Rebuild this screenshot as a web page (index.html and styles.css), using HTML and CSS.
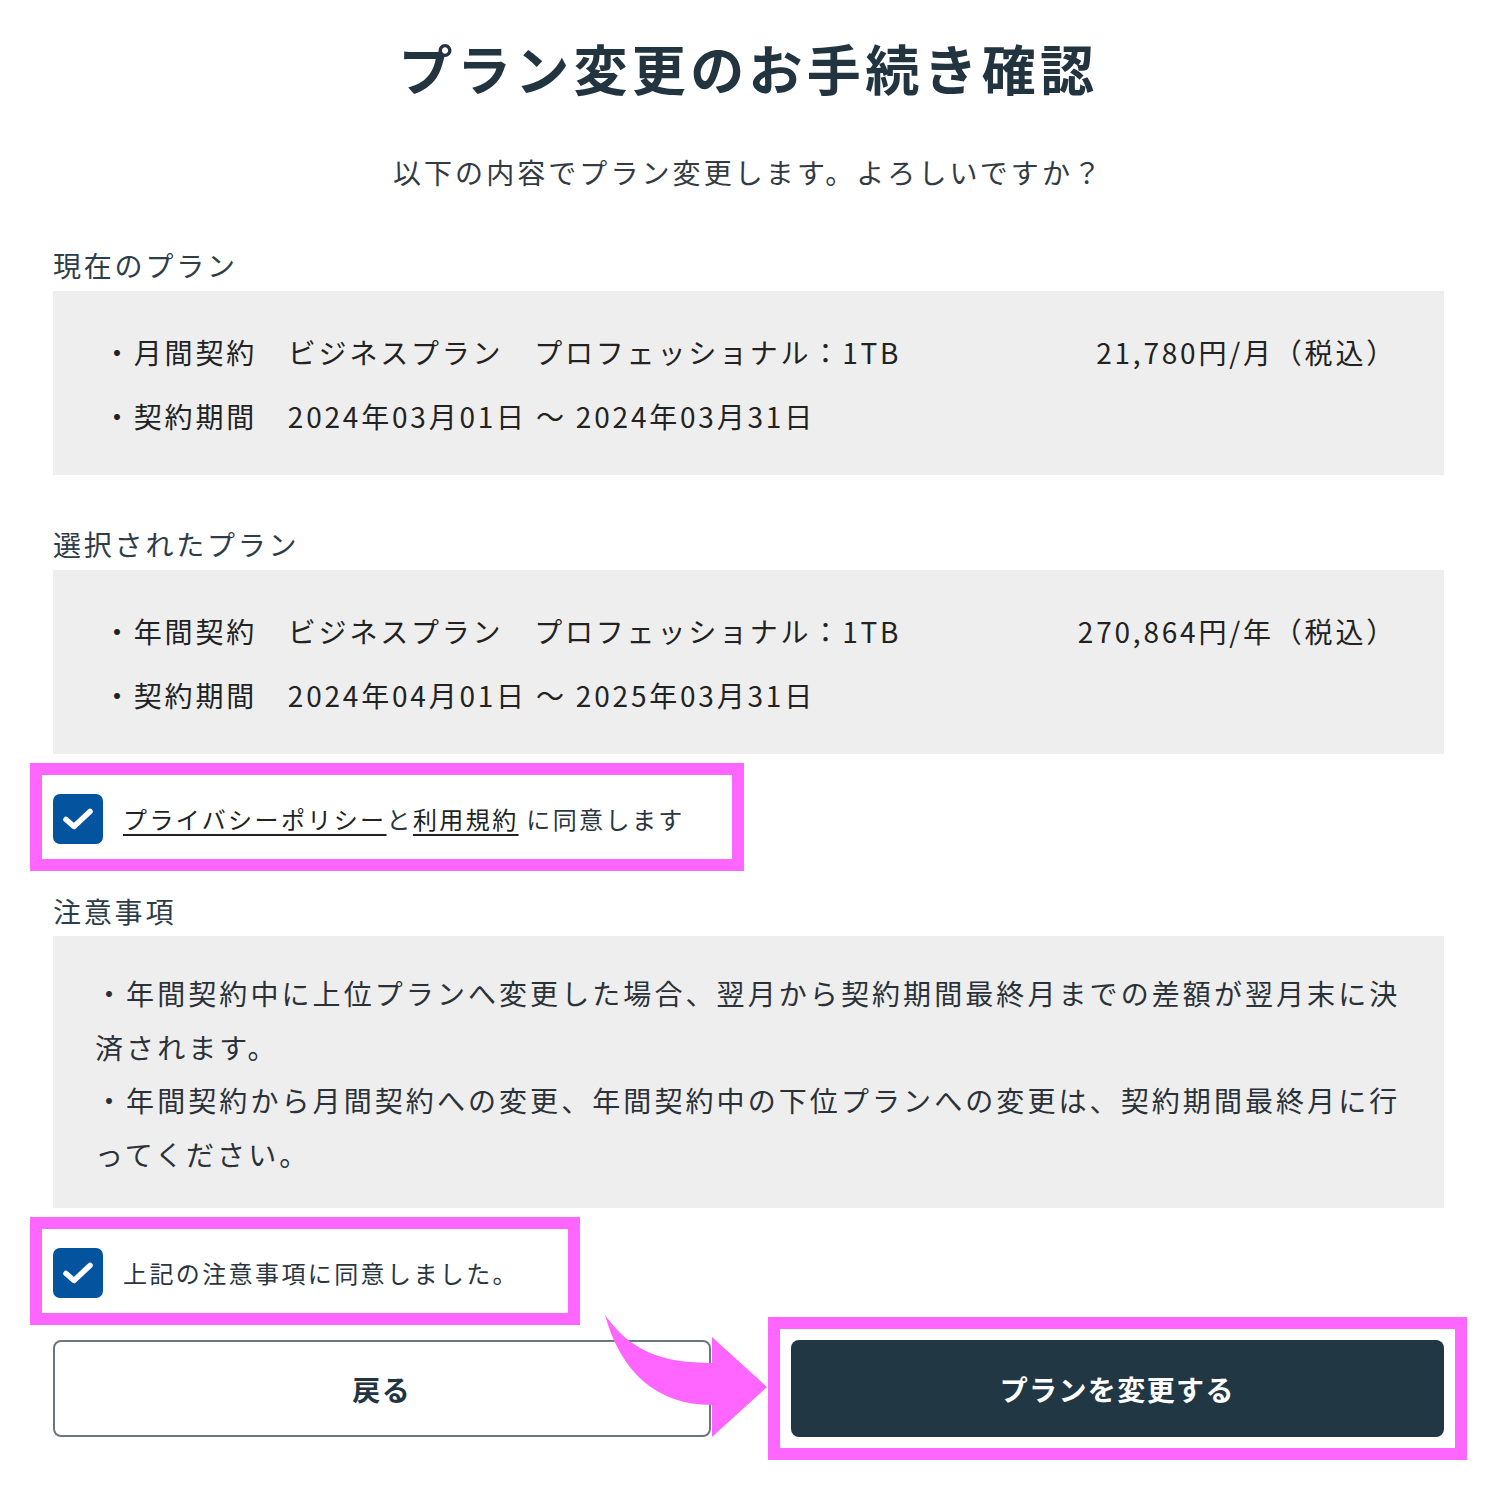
FILE: index.html
```html
<!DOCTYPE html>
<html lang="ja">
<head>
<meta charset="utf-8">
<title>プラン変更のお手続き確認</title>
<link rel="stylesheet" href="styles.css">
</head>
<body>
<main class="page">
  <h1 class="title">プラン変更のお手続き確認</h1>
  <p class="lead">以下の内容でプラン変更します。よろしいですか？</p>

  <section class="section">
    <h2 class="label">現在のプラン</h2>
    <div class="panel plan">
      <div class="row"><span>・月間契約　ビジネスプラン　プロフェッショナル：1TB</span><span class="price">21,780円/月（税込）</span></div>
      <div class="row"><span>・契約期間　2024年03月01日 ～ 2024年03月31日</span></div>
    </div>
  </section>

  <section class="section gap-top">
    <h2 class="label">選択されたプラン</h2>
    <div class="panel plan">
      <div class="row"><span>・年間契約　ビジネスプラン　プロフェッショナル：1TB</span><span class="price">270,864円/年（税込）</span></div>
      <div class="row"><span>・契約期間　2024年04月01日 ～ 2025年03月31日</span></div>
    </div>
  </section>

  <label class="agree hl-a">
    <span class="check"><svg viewBox="0 0 50 50" width="50" height="50"><path d="M13 25.5 L21 32.5 L37 17.5" fill="none" stroke="#fff" stroke-width="5.5" stroke-linecap="round" stroke-linejoin="round"/></svg></span>
    <span class="agree-text"><a class="link">プライバシーポリシー</a>と<a class="link">利用規約</a> に同意します</span>
  </label>

  <section class="section notes-sec">
    <h2 class="label">注意事項</h2>
    <div class="panel notes">
      <p>・年間契約中に上位プランへ変更した場合、翌月から契約期間最終月までの差額が翌月末に決済されます。</p>
      <p>・年間契約から月間契約への変更、年間契約中の下位プランへの変更は、契約期間最終月に行ってください。</p>
    </div>
  </section>

  <label class="agree hl-b">
    <span class="check"><svg viewBox="0 0 50 50" width="50" height="50"><path d="M13 25.5 L21 32.5 L37 17.5" fill="none" stroke="#fff" stroke-width="5.5" stroke-linecap="round" stroke-linejoin="round"/></svg></span>
    <span class="agree-text">上記の注意事項に同意しました。</span>
  </label>

  <div class="actions">
    <button class="btn btn-back" type="button">戻る</button>
    <button class="btn btn-primary" type="button">プランを変更する</button>
    <svg class="arrow" viewBox="0 0 170 130" width="170" height="130">
      <path d="M5 5 C30 40 60 53 112 53 L112 27 L167 77 L112 127 L112 95 C55 95 20 60 5 5 Z" fill="#ff66ff"/>
    </svg>
  </div>
</main>
</body>
</html>
```

FILE: styles.css
```css
*, *::before, *::after { box-sizing: border-box; }

html, body {
  margin: 0;
  background: #ffffff;
}

body {
  font-family: "Noto Sans CJK JP", "Noto Sans", sans-serif;
  color: #222222;
}

.page {
  width: 1500px;
  padding: 30px 56px 48px 53px;
}

.title {
  margin: 0;
  font-size: 54px;
  line-height: 76px;
  font-weight: 700;
  letter-spacing: 0.08em;
  text-align: center;
  color: #22343f;
}

.lead {
  margin: 46px 0 0;
  font-size: 28px;
  line-height: 40px;
  letter-spacing: 0.11em;
  text-align: center;
  color: #333b42;
}

.section {
  margin-top: 53px;
}

.section.gap-top {
  margin-top: 49px;
}

.label {
  margin: 0 0 6px;
  font-size: 28px;
  line-height: 40px;
  font-weight: 400;
  letter-spacing: 0.1em;
  color: #2e3d47;
}

.panel {
  background: #eeeeee;
}

.plan {
  padding: 29px 47px 27px 50px;
}

.row {
  display: flex;
  justify-content: space-between;
  font-size: 28px;
  line-height: 64px;
  letter-spacing: 0.1em;
  color: #222222;
  white-space: nowrap;
}

.agree {
  position: relative;
  display: flex;
  align-items: center;
  gap: 20px;
  height: 50px;
  margin-top: 40px;
}

.agree::after {
  content: "";
  position: absolute;
  left: -23px;
  top: -31px;
  height: 108px;
  border: 12px solid #ff66ff;
  pointer-events: none;
}

.hl-a::after { width: 714px; }
.hl-b::after { width: 550px; }

.check {
  flex: none;
  width: 50px;
  height: 50px;
  border-radius: 7px;
  background: #03539f;
  display: flex;
}

.agree-text {
  font-size: 24px;
  line-height: 32px;
  letter-spacing: 0.1em;
  color: #2a3640;
}

.link {
  color: #222222;
  text-decoration: underline;
  text-decoration-thickness: 1.5px;
  text-underline-offset: 5px;
}

.notes-sec {
  margin-top: 47px;
}

.notes-sec .label {
  margin-bottom: 5px;
}

.notes {
  padding: 31px 30px 27px 42px;
}

.notes p {
  margin: 0;
  font-size: 28px;
  line-height: 53.5px;
  letter-spacing: 0.11em;
  color: #2b3138;
  line-break: normal;
}

.actions {
  position: relative;
  display: flex;
  gap: 80px;
  margin-top: 42px;
}

.btn {
  flex: 1 1 0;
  height: 97px;
  border-radius: 8px;
  font-family: "Noto Sans CJK JP", "Noto Sans", sans-serif;
  font-size: 28px;
  font-weight: 700;
  letter-spacing: 0.05em;
  cursor: pointer;
}

.btn-back {
  background: #ffffff;
  border: 2px solid #6b7780;
  color: #22343f;
}

.btn-primary {
  position: relative;
  background: #213744;
  border: none;
  color: #ffffff;
}

.btn-primary::after {
  content: "";
  position: absolute;
  inset: -23px;
  border: 12px solid #ff66ff;
  pointer-events: none;
}

.arrow {
  position: absolute;
  left: 547px;
  top: -30px;
  pointer-events: none;
}
```
